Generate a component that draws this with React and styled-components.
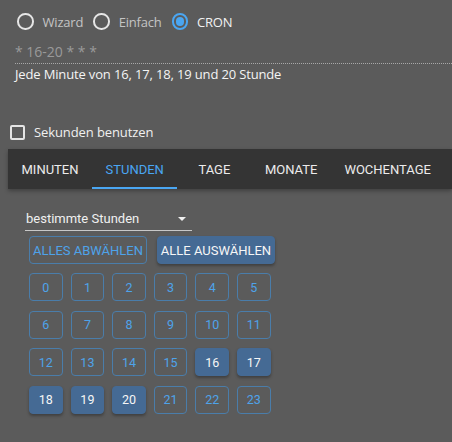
import React, { useState } from "react";
import styled, { createGlobalStyle, css } from "styled-components";

const Global = createGlobalStyle`
  html, body { margin: 0; padding: 0; background: #5b5b5b; }
  * { box-sizing: border-box; }
`;

const Page = styled.div`
  width: 452px;
  min-height: 442px;
  background: #5b5b5b;
  display: flex;
  flex-direction: column;
  overflow: hidden;
  font-family: "Open Sans", "Noto Sans", sans-serif;
`;

const RadioRow = styled.div`
  display: flex;
  align-items: center;
  height: 20px;
  margin-top: 11.5px;
  padding-left: 17px;
  gap: 10px;
`;

const RadioOption = styled.label`
  display: flex;
  align-items: center;
  gap: 9px;
  font-size: 13px;
  letter-spacing: -0.2px;
  color: ${(p) => (p.$checked ? "#f2f2f2" : "#c4c4c4")};
`;

const RadioCircle = styled.span`
  width: 16.5px;
  height: 16.5px;
  border-radius: 50%;
  border: 2px solid ${(p) => (p.$checked ? "#4aa6f2" : "#e6e6e6")};
  display: flex;
  align-items: center;
  justify-content: center;
  ${(p) =>
    p.$checked &&
    css`
      &::after {
        content: "";
        width: 8.5px;
        height: 8.5px;
        border-radius: 50%;
        background: #4aa6f2;
      }
    `}
`;

const InputBox = styled.div`
  margin-top: 10px;
  margin-left: 15px;
  height: 22px;
  line-height: 20px;
  font-size: 14px;
  color: #9a9a9a;
  border-bottom: 1px dotted #a8a8a8;
`;

const Description = styled.div`
  margin-left: 15px;
  line-height: 20px;
  font-size: 13px;
  letter-spacing: -0.15px;
  color: #f4f4f4;
`;

const CheckRow = styled.label`
  display: flex;
  align-items: center;
  height: 20px;
  margin-top: 38.5px;
  padding-left: 9.5px;
  gap: 9.5px;
  font-size: 13px;
  letter-spacing: -0.1px;
  color: #f0f0f0;
`;

const CheckBox = styled.span`
  width: 15px;
  height: 15px;
  border: 2px solid #e4e4e4;
  border-radius: 2px;
`;

const TabBar = styled.div`
  margin-top: 7px;
  margin-left: 8px;
  height: 40px;
  background: #343434;
  display: flex;
  box-shadow: 0 2px 4px rgba(0, 0, 0, 0.3);
`;

const Tab = styled.div`
  position: relative;
  min-width: 74px;
  padding: 0 13.5px;
  display: flex;
  align-items: center;
  justify-content: center;
  font-family: Roboto, "Liberation Sans", sans-serif;
  font-size: 13px;
  text-transform: uppercase;
  color: ${(p) => (p.$active ? "#4aa6f2" : "#ececec")};
  white-space: nowrap;
  ${(p) =>
    p.$active &&
    css`
      &::after {
        content: "";
        position: absolute;
        left: 0;
        right: 0;
        bottom: 0;
        height: 2px;
        background: #4aa6f2;
      }
    `}
`;

const Panel = styled.div`
  display: flex;
  flex-direction: column;
  padding-left: 25px;
  font-family: Roboto, "Liberation Sans", sans-serif;
`;

const Select = styled.div`
  margin-top: 18px;
  width: 167px;
  height: 24px;
  display: flex;
  align-items: center;
  justify-content: space-between;
  padding: 0 6px 0 1px;
  border-bottom: 1px solid #c8c8c8;
  font-size: 13px;
  color: #f0f0f0;
`;

const Arrow = styled.span`
  width: 0;
  height: 0;
  border-left: 4px solid transparent;
  border-right: 4px solid transparent;
  border-top: 4px solid #f0f0f0;
  margin-top: 1px;
`;

const ButtonRow = styled.div`
  display: flex;
  gap: 10px;
  margin-top: 5px;
  margin-left: 4px;
`;

const buttonBase = css`
  display: flex;
  align-items: center;
  justify-content: center;
  border-radius: 4px;
  font-family: Roboto, "Liberation Sans", sans-serif;
  ${(p) =>
    p.$filled
      ? css`
          background: #456a94;
          border: 1px solid #456a94;
          color: #f6f6f6;
          box-shadow: 0 2px 3px rgba(0, 0, 0, 0.3);
        `
      : css`
          background: transparent;
          border: 1px solid #4a7daa;
          color: #4ea3ea;
        `}
`;

const ActionButton = styled.div`
  ${buttonBase};
  width: 118px;
  height: 28px;
  font-size: 13px;
  text-transform: uppercase;
`;

const Grid = styled.div`
  display: grid;
  grid-template-columns: repeat(6, 33.6px);
  grid-auto-rows: 28px;
  column-gap: 8px;
  row-gap: 9.5px;
  margin-top: 9px;
  margin-left: 4px;
`;

const HourButton = styled.div`
  ${buttonBase};
  font-size: 12.5px;
`;

const selected = [16, 17, 18, 19, 20];

export default function App() {
  const [mode] = useState("cron");
  const modes = [
    ["wizard", "Wizard"],
    ["simple", "Einfach"],
    ["cron", "CRON"],
  ];
  const tabs = ["Minuten", "Stunden", "Tage", "Monate", "Wochentage"];
  return (
    <Page>
      <Global />
      <RadioRow>
        {modes.map(([k, label]) => (
          <RadioOption key={k} $checked={mode === k}>
            <RadioCircle $checked={mode === k} />
            {label}
          </RadioOption>
        ))}
      </RadioRow>
      <InputBox>* 16-20 * * *</InputBox>
      <Description>Jede Minute von 16, 17, 18, 19 und 20 Stunde</Description>
      <CheckRow>
        <CheckBox />
        Sekunden benutzen
      </CheckRow>
      <TabBar>
        {tabs.map((t) => (
          <Tab key={t} $active={t === "Stunden"}>
            {t}
          </Tab>
        ))}
      </TabBar>
      <Panel>
        <Select>
          bestimmte Stunden
          <Arrow />
        </Select>
        <ButtonRow>
          <ActionButton>Alles abwählen</ActionButton>
          <ActionButton $filled>Alle auswählen</ActionButton>
        </ButtonRow>
        <Grid>
          {Array.from({ length: 24 }, (_, i) => (
            <HourButton key={i} $filled={selected.includes(i)}>
              {i}
            </HourButton>
          ))}
        </Grid>
      </Panel>
    </Page>
  );
}
